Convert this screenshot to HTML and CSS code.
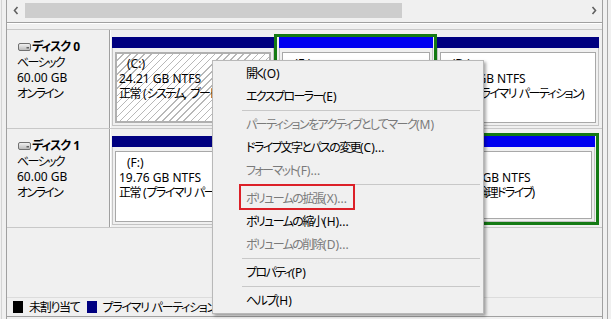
FILE: index.html
```html
<!DOCTYPE html>
<html lang="ja">
<head>
<meta charset="utf-8">
<title>ディスクの管理</title>
<link rel="stylesheet" href="styles.css">
</head>
<body>
<div class="outer">
  <div class="window">
    <div class="top-pane">
      <div class="hscroll">
        <span class="arrow"><svg width="6" height="9" viewBox="0 0 6 9"><polyline points="4.5,1 1.5,4.5 4.5,8" fill="none" stroke="#606060" stroke-width="1.6"/></svg></span>
        <div class="track"><div class="thumb"></div></div>
        <span class="arrow"><svg width="6" height="9" viewBox="0 0 6 9"><polyline points="1.5,1 4.5,4.5 1.5,8" fill="none" stroke="#606060" stroke-width="1.6"/></svg></span>
      </div>
    </div>
    <div class="disk-pane">
      <div class="disk-row">
        <div class="disk-label">
          <div class="disk-name"><svg class="hdd" width="13" height="8" viewBox="0 0 13 8"><defs><linearGradient id="g1" x1="0" y1="0" x2="0" y2="1"><stop offset="0" stop-color="#f4f4f4"/><stop offset="1" stop-color="#b8b8b8"/></linearGradient></defs><rect x="0.5" y="0.5" width="12" height="7" rx="1.5" fill="url(#g1)" stroke="#707070"/><rect x="8.5" y="4" width="2.5" height="1.5" fill="#606060"/></svg><span class="ja">ディスク</span>&nbsp;0</div>
          <div class="ja">ベーシック</div>
          <div>60.00 GB</div>
          <div class="ja">オンライン</div>
        </div>
        <div class="parts">
          <div class="part primary selected">
            <div class="bar"></div>
            <div class="body"><div class="box">
              <div class="vol">(C:)</div>
              <div>24.21 GB NTFS</div>
              <div><span class="ja">正常</span> (<span class="ja">システム</span>, <span class="ja">ブート</span>, <span class="ja">ページ</span> <span class="ja">ファイル</span>)</div>
            </div></div>
          </div>
          <div class="ext">
            <div class="part logical">
              <div class="bar"></div>
              <div class="body"><div class="box">
                <div class="vol">(E:)</div>
                <div>17.89 GB NTFS</div>
                <div><span class="ja">正常</span> (<span class="ja">論理ドライブ</span>)</div>
              </div></div>
            </div>
          </div>
          <div class="part primary">
            <div class="bar"></div>
            <div class="body"><div class="box">
              <div class="vol">(D:)</div>
              <div>17.90 GB NTFS</div>
              <div><span class="ja">正常</span> (<span class="ja">プライマリ</span> <span class="ja">パーティション</span>)</div>
            </div></div>
          </div>
        </div>
      </div>
      <div class="disk-row last">
        <div class="disk-label">
          <div class="disk-name"><svg class="hdd" width="13" height="8" viewBox="0 0 13 8"><defs><linearGradient id="g2" x1="0" y1="0" x2="0" y2="1"><stop offset="0" stop-color="#f4f4f4"/><stop offset="1" stop-color="#b8b8b8"/></linearGradient></defs><rect x="0.5" y="0.5" width="12" height="7" rx="1.5" fill="url(#g2)" stroke="#707070"/><rect x="8.5" y="4" width="2.5" height="1.5" fill="#606060"/></svg><span class="ja">ディスク</span>&nbsp;1</div>
          <div class="ja">ベーシック</div>
          <div>60.00 GB</div>
          <div class="ja">オンライン</div>
        </div>
        <div class="parts">
          <div class="part primary">
            <div class="bar"></div>
            <div class="body"><div class="box">
              <div class="vol">(F:)</div>
              <div>19.76 GB NTFS</div>
              <div><span class="ja">正常</span> (<span class="ja">プライマリ</span> <span class="ja">パーティション</span>)</div>
            </div></div>
          </div>
          <div class="part primary">
            <div class="bar"></div>
            <div class="body"><div class="box">
              <div class="vol">(G:)</div>
              <div>20.12 GB NTFS</div>
              <div><span class="ja">正常</span> (<span class="ja">プライマリ</span> <span class="ja">パーティション</span>)</div>
            </div></div>
          </div>
          <div class="ext">
            <div class="part logical">
              <div class="bar"></div>
              <div class="body"><div class="box">
                <div class="vol">(H:)</div>
                <div>20.00 GB NTFS</div>
                <div><span class="ja">正常</span> (<span class="ja">論理ドライブ</span>)</div>
              </div></div>
            </div>
          </div>
        </div>
      </div>
      <div class="legend">
        <span class="sw black"></span><span class="ja">未割り当て</span>
        <span class="sw navy"></span><span class="lg"><span class="ja">プライマリ</span> <span class="ja">パーティション</span></span>
        <span class="sw green"></span><span class="ja">拡張パーティション</span>
        <span class="sw blue"></span><span class="ja">論理ドライブ</span>
      </div>
    </div>
  </div>
</div>

<div class="menu">
  <div class="item"><span class="ja">開く</span>(O)</div>
  <div class="item"><span class="ja">エクスプローラー</span>(E)</div>
  <div class="sep"></div>
  <div class="item dis"><span class="ja">パーティションをアクティブとしてマーク</span>(M)</div>
  <div class="item"><span class="ja">ドライブ文字とパスの変更</span>(C)...</div>
  <div class="item dis"><span class="ja">フォーマット</span>(F)...</div>
  <div class="sep"></div>
  <div class="item dis"><span class="ja">ボリュームの拡張</span>(X)...<span class="redbox"></span></div>
  <div class="item"><span class="ja">ボリュームの縮小</span>(H)...</div>
  <div class="item dis"><span class="ja">ボリュームの削除</span>(D)...</div>
  <div class="sep"></div>
  <div class="item"><span class="ja">プロパティ</span>(P)</div>
  <div class="sep"></div>
  <div class="item"><span class="ja">ヘルプ</span>(H)</div>
</div>
</body>
</html>
```
FILE: styles.css
```css
* { box-sizing: border-box; }
html, body { margin: 0; padding: 0; }
body {
  width: 611px;
  height: 319px;
  overflow: hidden;
  position: relative;
  background: #f0f0f0;
  font-family: "Noto Sans", "Noto Sans CJK JP", sans-serif;
  font-size: 12px;
  color: #000;
  font-feature-settings: "palt" 1;
}
.ja { letter-spacing: -1.6px; }
.outer {
  margin-left: 1px;
  width: 607px;
  height: 319px;
  border-left: 1px solid #d4d4d4;
  border-right: 1px solid #a8a8a8;
  padding-left: 4px;
  padding-right: 4px;
}
.window {
  width: 597px;
  height: 319px;
  border-left: 1px solid #a0a0a0;
  border-right: 1px solid #a0a0a0;
  display: flex;
  flex-direction: column;
}
.top-pane {
  flex: none;
  height: 23px;
  border-bottom: 1px solid #a0a0a0;
  box-shadow: 0 1px 0 #fff;
}
.hscroll {
  display: flex;
  align-items: center;
  height: 21px;
}
.arrow {
  width: 17px;
  display: flex;
  justify-content: center;
  align-items: center;
}
.arrow svg { display: block; }
.track { flex: 1; height: 15px; }
.thumb {
  margin-left: 1px;
  width: 377px;
  height: 15px;
  background: #cdcdcd;
}
.disk-pane {
  flex: 1;
  display: flex;
  flex-direction: column;
  padding-top: 6px;
  border-bottom: 1px solid #a0a0a0;
  margin-bottom: 2px;
}
.disk-row {
  flex: none;
  display: flex;
  height: 99px;
  border-top: 1px solid #c8c8c8;
}
.disk-row.last { border-bottom: 1px solid #c8c8c8; height: 100px; }
.disk-label {
  flex: none;
  width: 102px;
  margin-left: 1px;
  padding: 9px 0 0 9px;
  line-height: 15.5px;
  white-space: nowrap;
  border-right: 1px solid #a0a0a0;
  box-shadow: 1px 0 0 #fff;
}
.disk-name {
  font-weight: bold;
  display: flex;
  align-items: center;
  margin-left: 1px;
}
.disk-name .ja { letter-spacing: -1px; }
.hdd { margin-right: 1px; }
.parts {
  flex: 1;
  min-width: 0;
  display: flex;
  padding: 4px 3px 2px 2px;
}
.parts > .part,
.parts > .ext {
  flex: 1 1 33%;
}
.part {
  flex: 1 1 0;
  display: flex;
  flex-direction: column;
  min-width: 0;
}
.primary { margin-top: 3px; }
.bar { height: 11px; background: #000080; flex: none; }
.logical .bar { background: #0000f0; }
.body {
  flex: 1;
  display: flex;
  padding: 4px 2px 2px 2px;
  border: 1px solid #c4c4c4;
  border-top: none;
  min-height: 0;
  min-width: 0;
}
.box {
  flex: 1;
  min-width: 0;
  overflow: hidden;
  white-space: nowrap;
  background: #fff;
  border: 1px solid #a8a8a8;
  padding: 3px 3px 0 3px;
  line-height: 15px;
}
.selected .box {
  border: 2px solid #b0b0b0;
  padding: 2px 2px 0 2px;
  background: repeating-linear-gradient(135deg, #ffffff 0 4px, #b8b8b8 4px 5px);
}
.vol { padding-left: 8px; }
.ext {
  display: flex;
  min-width: 0;
  border: 3px solid #147a14;
  padding: 0 1px 0 2px;
}
.legend {
  margin-top: auto;
  flex: none;
  height: 19px;
  display: flex;
  align-items: center;
  gap: 6px;
  padding-left: 6px;
  border-top: 1px solid #dcdcdc;
  white-space: nowrap;
  overflow: hidden;
}
.legend .ja { letter-spacing: -1.3px; }
.sw { width: 10px; height: 12px; flex: none; }
.sw.black { background: #000; }
.sw.navy { background: #000080; margin-left: 1px; }
.sw.green { background: #147a14; margin-left: 1px; }
.sw.blue { background: #0000f0; margin-left: 1px; }

.menu {
  position: absolute;
  left: 212px;
  top: 60px;
  width: 272px;
  height: 254px;
  background: #f0f0f0;
  border: 1px solid #b8b8b8;
  padding: 1px 0 2px 0;
  box-shadow: 2px 2px 3px rgba(0, 0, 0, 0.35);
}
.item {
  position: relative;
  height: 23px;
  line-height: 23px;
  padding-left: 33px;
  white-space: nowrap;
}
.item.dis { color: #7a7a7a; }
.sep {
  height: 5px;
  margin: 0 3px 0 29px;
  background: linear-gradient(#c8c8c8, #c8c8c8) 0 2px / 100% 1px no-repeat;
}
.redbox {
  position: absolute;
  left: 26px;
  top: -3px;
  width: 116px;
  height: 26px;
  border: 2px solid #dc2028;
}
```
